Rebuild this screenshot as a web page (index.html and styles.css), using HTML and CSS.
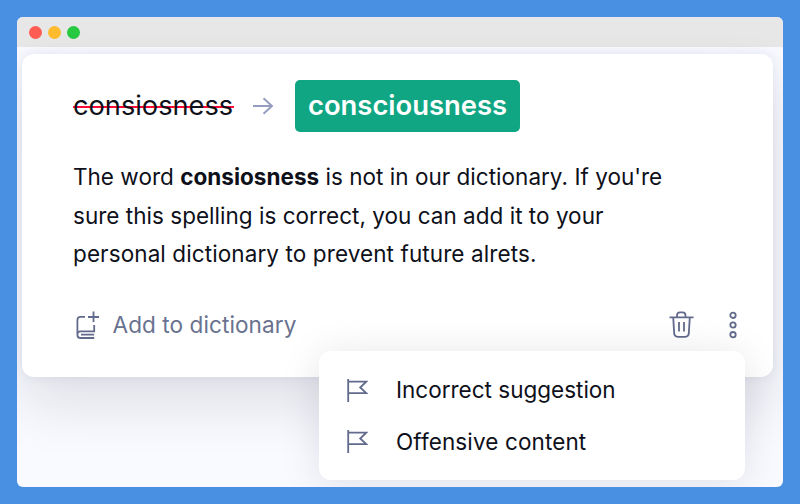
FILE: index.html
```html
<!DOCTYPE html>
<html lang="en">
  <head>
    <meta charset="UTF-8" />
    <meta name="viewport" content="width=device-width, initial-scale=1.0" />
    <title>Spelling suggestion</title>
    <link rel="stylesheet" href="styles.css">
  </head>
  <body>
    <div class="window">
      <div class="title_bar">
        <span class="dot red"></span>
        <span class="dot yellow"></span>
        <span class="dot green"></span>
      </div>

      <div class="content">
        <div class="card">
          <div class="correction">
            <span class="wrong">consiosness</span>
            <svg class="arrow" width="22" height="18" viewBox="0 0 22 18">
              <path d="M1 9H20M11.5 1.2L20 9L11.5 16.8" />
            </svg>
            <button class="right">consciousness</button>
          </div>

          <p class="message">
            <span class="line1">The word <b>consiosness</b> is not in our dictionary. If you're</span><br />
            <span class="line2">sure this spelling is correct, you can add it to your</span><br />
            <span class="line3">personal dictionary to prevent future alrets.</span>
          </p>

          <div class="actions">
            <button class="add">
              <svg class="icon" width="24" height="28" viewBox="0 0 24 28">
                <path d="M17.5 0.5V11M12 6H23M9 5.8H4.5Q1.4 5.8 1.4 9V24Q1.4 27 4.5 27H18.2M18.2 14V20.3H4.5Q1.4 20.3 1.4 23.6M18.2 23.7H5" />
              </svg>
              <span>Add to dictionary</span>
            </button>
            <div class="tools">
              <button>
                <svg class="icon" width="25" height="27" viewBox="0 0 25 27">
                  <path d="M0.5 6.4H24.5M8 6V4.5Q8 1.4 11 1.4H13.5Q16.5 1.4 16.5 4.5V6M4.2 6.4L5.2 22.5Q5.5 25.8 8.7 25.8H16.3Q19.5 25.8 19.8 22.5L20.8 6.4M10 11V20.5M15 11V20.5" />
                </svg>
              </button>
              <button>
                <svg class="icon" width="8" height="28" viewBox="0 0 8 28">
                  <circle cx="4" cy="4.3" r="2.7" />
                  <circle cx="4" cy="14" r="2.7" />
                  <circle cx="4" cy="23.7" r="2.7" />
                </svg>
              </button>
            </div>
          </div>
        </div>

        <div class="menu">
          <div class="menu_item">
            <svg class="icon" width="21" height="24" viewBox="0 0 21 24">
              <path d="M1.2 1V24M1.2 3.7H19.2L13.2 9.5L19.2 15.1H1.2" />
            </svg>
            <span>Incorrect suggestion</span>
          </div>
          <div class="menu_item">
            <svg class="icon" width="21" height="24" viewBox="0 0 21 24">
              <path d="M1.2 1V24M1.2 3.7H19.2L13.2 9.5L19.2 15.1H1.2" />
            </svg>
            <span class="offensive">Offensive content</span>
          </div>
        </div>
      </div>
    </div>
  </body>
</html>
```

FILE: styles.css
```css
* {
  box-sizing: border-box;
}
body {
  margin: 0;
  height: 504px;
  padding: 17px;
  background: #4a90e2;
  font-family: "Inter", sans-serif;
  color: #0e101a;
  overflow: hidden;
}
button {
  border: none;
  background: none;
  padding: 0;
  font-family: inherit;
  cursor: pointer;
}
svg {
  display: block;
  fill: none;
}
.window {
  height: 470px;
  border-radius: 6px;
  background: #f9faff;
  overflow: hidden;
}
.title_bar {
  display: flex;
  align-items: center;
  gap: 6px;
  height: 30px;
  padding: 1px 0 0 12px;
  background: #e7e7e7;
}
.dot {
  width: 13px;
  height: 13px;
  border-radius: 50%;
}
.red {
  background: #ff5c54;
}
.yellow {
  background: #febb2e;
}
.green {
  background: #26c940;
}
.content {
  position: relative;
  padding: 7px 10px 0 5px;
}
.card {
  height: 323px;
  padding: 25px 36.5px 0 51px;
  border-radius: 12px;
  background: #fff;
  box-shadow: 0 28px 56px rgba(14, 16, 26, 0.11), 0 0 12px rgba(109, 117, 180, 0.14);
}
.correction {
  display: flex;
  align-items: center;
  height: 53px;
}
.wrong {
  width: 161px;
  font-size: 27.2px;
  line-height: 40px;
  white-space: nowrap;
  background: linear-gradient(#ff0a36, #ff0a36) 0 20px / 100% 2px no-repeat;
}
.arrow {
  margin: 1px 21px 0 18px;
  stroke: #949cc0;
  stroke-width: 1.9;
}
.right {
  width: 225px;
  height: 52px;
  padding-bottom: 2px;
  border-radius: 5px;
  background: #11a683;
  color: #fff;
  font-size: 27.4px;
  font-weight: 600;
}
.message {
  margin: 26px 0 0;
  font-size: 22.5px;
  line-height: 38.7px;
  white-space: nowrap;
}
.line1,
.line2 {
  letter-spacing: 0.02px;
}
.line3 {
  letter-spacing: 0.1px;
}
.actions {
  display: flex;
  justify-content: space-between;
  align-items: center;
  margin-top: 36.5px;
}
.icon {
  stroke: #626b8c;
  stroke-width: 1.8;
}
.add {
  display: flex;
  align-items: center;
  gap: 13px;
  padding-left: 2.5px;
  color: #69728f;
  font-size: 22.6px;
  letter-spacing: 0.06px;
}
.add span {
  padding-bottom: 1px;
}
.tools {
  display: flex;
  align-items: center;
  gap: 35px;
}
/* dropdown of the three-dots button */
.menu {
  position: absolute;
  top: 304px;
  left: 302px;
  width: 426px;
  height: 129px;
  padding: 13px 28px;
  border-radius: 12px;
  background: #fff;
  box-shadow: 0 4px 40px rgba(14, 16, 50, 0.11);
}
.menu_item {
  display: flex;
  align-items: center;
  gap: 28px;
  height: 51.5px;
  font-size: 22.5px;
}
.offensive {
  letter-spacing: 0.12px;
}
```
